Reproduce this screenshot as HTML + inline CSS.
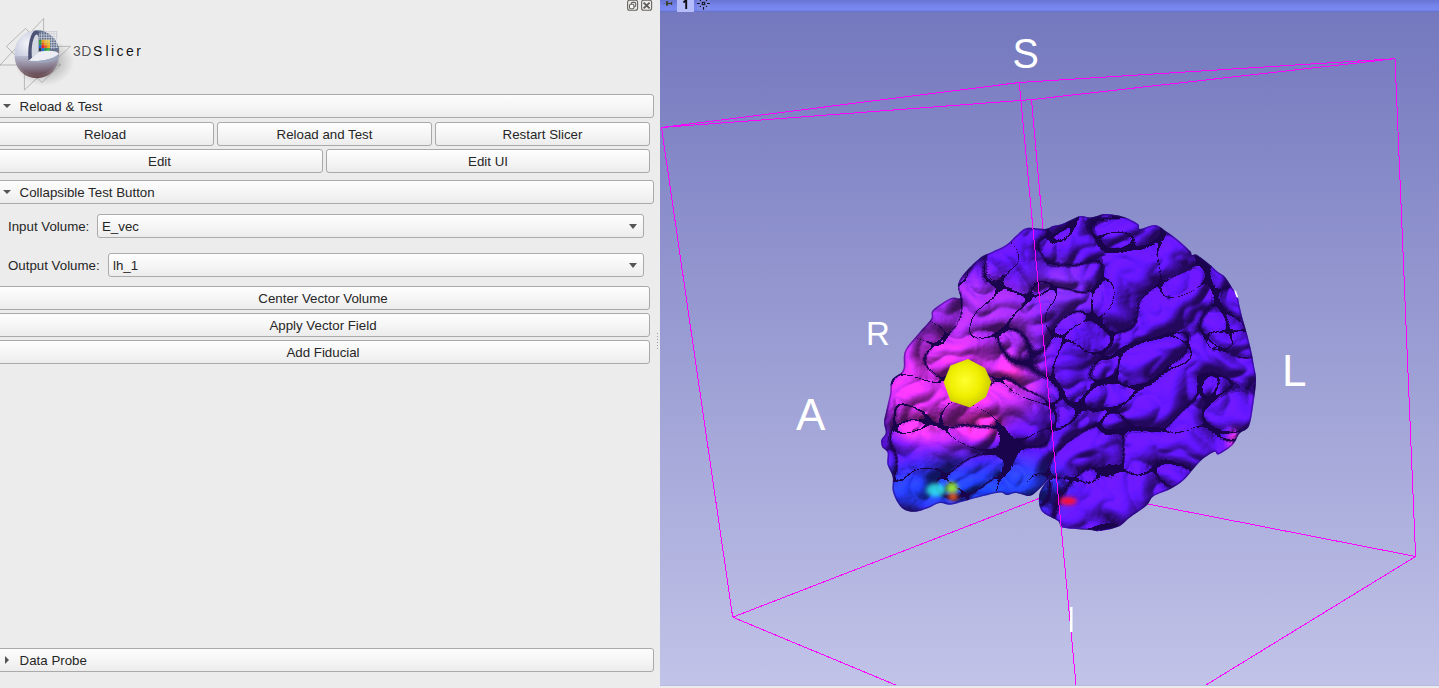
<!DOCTYPE html>
<html><head><meta charset="utf-8">
<style>
*{margin:0;padding:0;box-sizing:border-box}
html,body{width:1439px;height:688px;overflow:hidden;background:#ececec;font-family:"Liberation Sans",sans-serif;font-size:13.3px;color:#262626}
.a{position:absolute}
.hdr{position:absolute;left:-4px;height:24px;border:1px solid #aaa;border-radius:3px;background:linear-gradient(#fdfdfd,#f4f4f4 60%,#ececec)}
.hdr span{position:absolute;left:22.6px;top:4px;white-space:nowrap}
.tri{position:absolute;left:6px;top:9px;width:0;height:0;border-left:4px solid transparent;border-right:4px solid transparent;border-top:4px solid #555}
.trir{position:absolute;left:8px;top:7px;width:0;height:0;border-top:4px solid transparent;border-bottom:4px solid transparent;border-left:4.2px solid #555}
.btn{position:absolute;height:24px;border:1px solid #a9a9a9;border-radius:3px;background:linear-gradient(#fefefe,#f6f6f6 50%,#ececec);text-align:center;line-height:23px;white-space:nowrap}
.cb{position:absolute;height:24px;border:1px solid #ababab;border-radius:3px;background:linear-gradient(#fefefe,#f6f6f6 50%,#ececec);line-height:23px;padding-left:4px;white-space:nowrap}
.cb i{position:absolute;right:6px;top:9px;width:0;height:0;border-left:4.5px solid transparent;border-right:4.5px solid transparent;border-top:5px solid #555}
.lbl{position:absolute;white-space:nowrap}
#view{position:absolute;left:660px;top:0;width:779px;height:686px;background:linear-gradient(#7277bc,#8f93cb 45%,#bfc0e6);overflow:hidden}
</style></head><body>
<!-- logo -->
<svg class="a" style="left:0;top:0" width="160" height="92" viewBox="0 0 160 92">
<defs>
<radialGradient id="lsph" cx="0.3" cy="0.3" r="0.85"><stop offset="0" stop-color="#f4f5fa"/><stop offset="0.45" stop-color="#c4c8dc"/><stop offset="0.75" stop-color="#8a8aa4"/><stop offset="1" stop-color="#5a3c44"/></radialGradient>
<radialGradient id="lsh" cx="0.5" cy="0.5" r="0.5"><stop offset="0" stop-color="#000" stop-opacity="0.35"/><stop offset="1" stop-color="#000" stop-opacity="0"/></radialGradient>
<linearGradient id="lbot" x1="0" y1="0" x2="0" y2="1"><stop offset="0" stop-color="#b4b8cc"/><stop offset="0.45" stop-color="#8a7e90"/><stop offset="1" stop-color="#563034"/></linearGradient>
</defs>
<ellipse cx="44" cy="62" rx="30" ry="24" fill="url(#lsh)"/>
<g stroke="#8a8a8a" stroke-width="0.55" fill="none">
<path d="M43.6,18.5 L0,65 L60.5,65 L41.9,82.5 L6.4,46.4 L25.6,28.4 L60.5,65"/>
<path d="M43.6,18.5 L43.6,48"/>
<path d="M70.4,46.4 L24.4,90 L24.4,48"/>
<path d="M70.4,46.4 L57,46.4"/>
</g>
<g stroke="#b4b8c4" stroke-width="0.45"><path d="M41.5,31.5 V51 M44,31.5 V51 M46.5,31.5 V51 M49,31.5 V51 M51.5,31.5 V51 M54,31.5 V51 M56.5,31.5 V51 M38.8,31.5 H57.5 M38.8,34 H57.5 M38.8,36.5 H57.5 M38.8,39 H57.5"/></g>
<circle cx="36.8" cy="52.6" r="22.3" fill="url(#lsph)"/>
<!-- bottom half darker -->
<path d="M14.5,56 A22.3,22.3 0 0 0 59.1,56 Z" fill="url(#lbot)" opacity="0.85"/>
<!-- cutout quarter -->
<path d="M36.8,30.3 A22.3,22.3 0 0 1 59.1,50 L36.8,60 Z" fill="#66738f"/>
<g stroke="#e8ecf4" stroke-width="0.5">
<path d="M39,33 V52 M41.5,32 V52 M44,31.5 V51 M46.5,32 V50 M49,33 V50 M51.5,34 V49 M54,36 V49 M56.5,39 V48"/>
<path d="M37,35 H55 M37,37.5 H56 M37,40 H57 M37,42.5 H58 M37,45 H58 M37,47.5 H58"/>
</g>
<g>
<rect x="38.8" y="39.8" width="2.8" height="2.8" fill="#2a9a3a"/><rect x="41.6" y="39.8" width="2.8" height="2.8" fill="#f0a020"/><rect x="44.4" y="39.8" width="2.8" height="2.8" fill="#f0c040"/><rect x="47.2" y="39.8" width="2.8" height="2.8" fill="#e8d060"/>
<rect x="38.8" y="42.6" width="2.8" height="2.8" fill="#20a040"/><rect x="41.6" y="42.6" width="2.8" height="2.8" fill="#f06020"/><rect x="44.4" y="42.6" width="2.8" height="2.8" fill="#f0b020"/><rect x="47.2" y="42.6" width="2.8" height="2.8" fill="#f0c030"/>
<rect x="38.8" y="45.4" width="2.8" height="2.8" fill="#2060e0"/><rect x="41.6" y="45.4" width="2.8" height="2.8" fill="#f02020"/><rect x="44.4" y="45.4" width="2.8" height="2.8" fill="#f06020"/><rect x="47.2" y="45.4" width="2.8" height="2.8" fill="#f0b020"/>
<rect x="38.8" y="48.2" width="2.8" height="2.8" fill="#303840"/><rect x="41.6" y="48.2" width="2.8" height="2.8" fill="#2070e0"/><rect x="44.4" y="48.2" width="2.8" height="2.8" fill="#20a040"/><rect x="47.2" y="48.2" width="2.8" height="2.8" fill="#40b040"/>
</g>
<!-- vertical cut face crescent -->
<path d="M28.5,60.5 C27.5,50 29,36 34,31 C37,30 38.5,31 38.8,33 L38.8,53 Z" fill="#4c5274"/>
<path d="M32,58 C31,50 32,40 35.5,35 C37,34 38,35 38.6,37 L38.6,53 Z" fill="#d4d8e0"/>
<!-- horizontal cut face -->
<path d="M28.5,60.8 L38.8,52 C46,50.5 55,50 59,53.5 C58.5,57 48,60 38,61 Z" fill="#eceef4"/>
<path d="M28.5,60.8 C40,62 54,59 59,53.5 C59,56 58,58 57,59.5 C50,63 38,64.5 28.5,60.8 Z" fill="#9ea4bc"/>
</svg>
<div class="lbl" style="left:73.0px;top:43px;font-size:14px;color:#555;text-shadow:0 0 1px #fff,0 0 2px #fff">3</div><div class="lbl" style="left:81.2px;top:43px;font-size:14px;color:#555;text-shadow:0 0 1px #fff,0 0 2px #fff">D</div><div class="lbl" style="left:93.0px;top:43px;font-size:14px;color:#111;text-shadow:0 0 1px #fff,0 0 2px #fff">S</div><div class="lbl" style="left:105.5px;top:43px;font-size:14px;color:#111;text-shadow:0 0 1px #fff,0 0 2px #fff">l</div><div class="lbl" style="left:111.1px;top:43px;font-size:14px;color:#111;text-shadow:0 0 1px #fff,0 0 2px #fff">i</div><div class="lbl" style="left:116.4px;top:43px;font-size:14px;color:#111;text-shadow:0 0 1px #fff,0 0 2px #fff">c</div><div class="lbl" style="left:125.9px;top:43px;font-size:14px;color:#111;text-shadow:0 0 1px #fff,0 0 2px #fff">e</div><div class="lbl" style="left:136.3px;top:43px;font-size:14px;color:#111;text-shadow:0 0 1px #fff,0 0 2px #fff">r</div>

<!-- top-right dock buttons -->
<svg class="a" style="left:620px;top:0" width="40" height="14" viewBox="620 0 40 14">
<g fill="none" stroke="#68645e" stroke-width="1.1">
<rect x="627.6" y="0.3" width="10" height="10" rx="2"/>
<rect x="641.6" y="0.3" width="10" height="10" rx="2"/>
<rect x="631.3" y="2.4" width="4.4" height="4.4" rx="1.2"/>
<rect x="629.5" y="4.3" width="4.4" height="4.4" rx="1.2" fill="#fafafa"/>
</g>
<path d="M643.6,2.6 L649.6,8.4 M649.6,2.6 L643.6,8.4" stroke="#5f5b56" stroke-width="1.8"/>
</svg>
<div class="hdr" style="top:94px;width:658px"><div class="tri"></div><span>Reload &amp; Test</span></div>
<div class="btn" style="left:-4px;top:122px;width:218px">Reload</div>
<div class="btn" style="left:217px;top:122px;width:215px">Reload and Test</div>
<div class="btn" style="left:435px;top:122px;width:215px">Restart Slicer</div>
<div class="btn" style="left:-4px;top:149px;width:327px">Edit</div>
<div class="btn" style="left:326px;top:149px;width:324px">Edit UI</div>

<div class="hdr" style="top:180px;width:658px"><div class="tri"></div><span>Collapsible Test Button</span></div>
<div class="lbl" style="left:8px;top:219px">Input Volume:</div>
<div class="cb" style="left:97px;top:214px;width:547px">E_vec<i></i></div>
<div class="lbl" style="left:8px;top:258px">Output Volume:</div>
<div class="cb" style="left:108px;top:253px;width:536px">lh_1<i></i></div>

<div class="btn" style="left:-4px;top:286px;width:654px">Center Vector Volume</div>
<div class="btn" style="left:-4px;top:313px;width:654px">Apply Vector Field</div>
<div class="btn" style="left:-4px;top:340px;width:654px">Add Fiducial</div>

<div class="hdr" style="top:648px;width:658px"><div class="trir"></div><span>Data Probe</span></div>

<!-- splitter --><div class="a" style="left:656.5px;top:333px;width:1px;height:17px;background:repeating-linear-gradient(#9a9a9a 0 1px,transparent 1px 3px)"></div>
<div id="view">
<svg width="779" height="686" viewBox="660 0 779 686" style="position:absolute;left:0;top:0">
<defs>
<linearGradient id="bg" x1="0" y1="12" x2="0" y2="686" gradientUnits="userSpaceOnUse"><stop offset="0" stop-color="#7478be"/><stop offset="1" stop-color="#c1c3e8"/></linearGradient>
<linearGradient id="bar" x1="0" y1="0" x2="0" y2="12" gradientUnits="userSpaceOnUse"><stop offset="0" stop-color="#6874d4"/><stop offset="0.5" stop-color="#7585ec"/><stop offset="0.9" stop-color="#7888f2"/><stop offset="1" stop-color="#7080e4"/></linearGradient>
<clipPath id="bc"><path d="M886.0,412.0 C887.0,407.2 889.0,399.3 890.0,394.0 C891.0,388.7 889.8,384.0 892.0,380.0 C894.2,376.0 900.8,374.8 903.0,370.0 C905.2,365.2 902.3,357.2 905.0,351.0 C907.7,344.8 914.7,338.3 919.0,333.0 C923.3,327.7 928.7,322.8 931.0,319.0 C933.3,315.2 929.7,313.5 933.0,310.0 C936.3,306.5 946.5,300.0 951.0,298.0 C955.5,296.0 958.8,300.0 960.0,298.0 C961.2,296.0 957.5,289.8 958.0,286.0 C958.5,282.2 959.3,279.7 963.0,275.0 C966.7,270.3 975.2,261.8 980.0,258.0 C984.8,254.2 987.7,254.2 992.0,252.0 C996.3,249.8 1001.8,247.8 1006.0,245.0 C1010.2,242.2 1013.5,237.8 1017.0,235.0 C1020.5,232.2 1022.3,229.0 1027.0,228.0 C1031.7,227.0 1040.7,229.3 1045.0,229.0 C1049.3,228.7 1050.2,226.8 1053.0,226.0 C1055.8,225.2 1058.7,225.2 1062.0,224.0 C1065.3,222.8 1069.8,220.3 1073.0,219.0 C1076.2,217.7 1078.2,216.2 1081.0,216.0 C1083.8,215.8 1087.3,217.5 1090.0,217.5 C1092.7,217.5 1094.3,216.6 1097.0,216.0 C1099.7,215.4 1101.5,213.8 1106.0,214.0 C1110.5,214.2 1118.7,215.3 1124.0,217.0 C1129.3,218.7 1135.3,222.0 1138.0,224.0 C1140.7,226.0 1137.2,228.8 1140.0,229.0 C1142.8,229.2 1150.5,224.5 1155.0,225.0 C1159.5,225.5 1163.2,229.5 1167.0,232.0 C1170.8,234.5 1174.2,236.8 1178.0,240.0 C1181.8,243.2 1187.7,248.5 1190.0,251.0 C1192.3,253.5 1190.8,254.3 1192.0,255.0 C1193.2,255.7 1194.2,253.5 1197.0,255.0 C1199.8,256.5 1205.5,261.2 1209.0,264.0 C1212.5,266.8 1215.3,269.8 1218.0,272.0 C1220.7,274.2 1222.5,274.2 1225.0,277.0 C1227.5,279.8 1231.0,286.2 1233.0,289.0 C1235.0,291.8 1235.8,290.8 1237.0,294.0 C1238.2,297.2 1239.0,303.7 1240.0,308.0 C1241.0,312.3 1241.8,315.7 1243.0,320.0 C1244.2,324.3 1245.7,329.0 1247.0,334.0 C1248.3,339.0 1249.8,344.7 1251.0,350.0 C1252.2,355.3 1253.2,361.0 1254.0,366.0 C1254.8,371.0 1256.1,373.8 1256.0,380.0 C1255.9,386.2 1254.7,395.3 1253.5,403.0 C1252.3,410.7 1251.3,420.9 1249.0,426.0 C1246.7,431.1 1242.2,430.3 1239.5,433.5 C1236.8,436.7 1236.1,441.5 1232.6,445.0 C1229.1,448.5 1221.7,453.2 1218.6,454.4 C1215.5,455.6 1217.1,450.8 1214.0,452.0 C1210.9,453.2 1205.0,456.7 1200.0,461.4 C1195.0,466.1 1188.7,475.4 1183.7,480.0 C1178.7,484.6 1174.8,486.6 1169.8,489.3 C1164.8,492.0 1157.4,493.6 1153.5,496.3 C1149.6,499.0 1150.4,502.1 1146.5,505.6 C1142.6,509.1 1134.9,513.7 1130.2,517.2 C1125.5,520.7 1123.6,524.2 1118.6,526.5 C1113.6,528.8 1104.8,530.4 1100.0,531.0 C1095.2,531.6 1095.2,530.4 1090.0,530.0 C1084.8,529.6 1073.3,529.0 1068.5,528.5 C1063.7,528.0 1062.8,528.2 1061.0,527.0 C1059.2,525.8 1060.7,523.2 1058.0,521.0 C1055.3,518.8 1048.0,516.2 1045.0,514.0 C1042.0,511.8 1041.0,510.4 1040.0,507.6 C1039.0,504.8 1038.7,500.3 1039.0,497.0 C1039.3,493.7 1039.8,491.7 1042.0,488.0 C1044.2,484.3 1051.5,475.8 1052.0,475.0 C1052.5,474.2 1047.7,480.2 1045.0,483.0 C1042.3,485.8 1038.7,489.8 1036.0,492.0 C1033.3,494.2 1032.3,495.8 1029.0,496.0 C1025.7,496.2 1019.7,493.2 1016.0,493.0 C1012.3,492.8 1009.7,495.1 1007.0,495.0 C1004.3,494.9 1003.9,492.3 1000.0,492.5 C996.1,492.7 989.4,494.6 983.4,496.0 C977.4,497.4 969.5,499.8 964.0,501.2 C958.5,502.6 954.3,504.4 950.3,504.7 C946.3,505.0 943.6,502.4 939.8,503.0 C936.0,503.6 931.7,506.8 927.6,508.2 C923.5,509.6 919.2,511.4 915.4,511.7 C911.6,512.0 907.9,511.4 905.0,510.0 C902.1,508.6 900.0,506.2 898.0,503.0 C896.0,499.8 893.6,495.1 892.7,490.7 C891.8,486.3 893.6,481.1 892.7,476.8 C891.8,472.5 888.4,468.7 887.5,464.6 C886.6,460.5 888.4,455.3 887.5,452.4 C886.6,449.5 883.2,449.1 882.2,447.0 C881.2,444.9 880.7,442.3 881.3,440.0 C881.9,437.7 885.2,435.9 885.7,433.0 C886.2,430.1 884.0,426.2 884.0,422.7 C884.0,419.2 885.0,416.8 886.0,412.0Z"/></clipPath>
<filter id="blur6" x="-50%" y="-50%" width="200%" height="200%"><feGaussianBlur stdDeviation="12"/></filter>
<filter id="blur2" x="-50%" y="-50%" width="200%" height="200%"><feGaussianBlur stdDeviation="2"/></filter>
<filter id="blur3" x="-50%" y="-50%" width="200%" height="200%"><feGaussianBlur stdDeviation="4"/></filter>
<filter id="tex" x="860" y="200" width="420" height="340" filterUnits="userSpaceOnUse">
<feTurbulence type="turbulence" baseFrequency="0.045" numOctaves="2" seed="7" result="t"/>
<feColorMatrix in="t" type="matrix" values="0 0 0 0 0.12  0 0 0 0 0.03  0 0 0 0 0.35  -5 0 0 0 1.15"/>
</filter>
<radialGradient id="sph" cx="0.45" cy="0.45" r="0.6"><stop offset="0" stop-color="#ffff30"/><stop offset="0.55" stop-color="#eeee00"/><stop offset="1" stop-color="#c4c400"/></radialGradient>
<filter id="lit" x="820" y="160" width="500" height="420" filterUnits="userSpaceOnUse" color-interpolation-filters="sRGB">
<feTurbulence type="turbulence" baseFrequency="0.019 0.021" numOctaves="1" seed="11" result="n0"/>
<feTurbulence type="turbulence" baseFrequency="0.019 0.021" numOctaves="2" seed="11" result="nh0"/>
<feTurbulence type="fractalNoise" baseFrequency="0.014" numOctaves="2" seed="3" result="w"/>
<feDisplacementMap in="n0" in2="w" scale="28" xChannelSelector="R" yChannelSelector="G" result="n"/>
<feDisplacementMap in="nh0" in2="w" scale="28" xChannelSelector="R" yChannelSelector="G" result="nh"/>
<feColorMatrix in="nh" type="matrix" values="0 0 0 0 0  0 0 0 0 0  0 0 0 0 0  1 0 0 0 0" result="h0"/>
<feComponentTransfer in="h0" result="h"><feFuncA type="gamma" amplitude="1" exponent="0.5" offset="0"/></feComponentTransfer>
<feGaussianBlur in="h" stdDeviation="1.0" result="hb"/>
<feDiffuseLighting in="hb" surfaceScale="20" diffuseConstant="1.0" lighting-color="#ffffff" result="L"><feDistantLight azimuth="235" elevation="50"/></feDiffuseLighting>
<feComposite in="SourceGraphic" in2="L" operator="arithmetic" k1="0.9" k2="0.4" k3="0" k4="0" result="c"/>
<feColorMatrix in="n" type="matrix" values="0 0 0 0 0.1  0 0 0 0 0.02  0 0 0 0 0.3  -28 0 0 0 1.2" result="ln"/>
<feComposite in="ln" in2="c" operator="over" result="c2"/>
<feComposite in="c2" in2="SourceGraphic" operator="in"/>
</filter>
</defs>
<rect x="660" y="0" width="779" height="686" fill="url(#bg)"/>
<!-- box lines behind brain -->
<g stroke="#ff00ff" stroke-width="1" fill="none" shape-rendering="crispEdges">
<path d="M661.5,127.5 L1019.5,82.5 L1395,58.7 M661.5,127.5 L1031.5,99.6 L1395,58.7 M661.5,127.5 L732.7,617.2 M1395,58.7 L1415.6,556.5 M732.7,617.2 L1066,488 L1415.6,556.5 M732.7,617.2 L903,688 M1415.6,556.5 L1201,688 M1031.5,99.6 L1066,488"/>
</g>
<!-- brain -->
<g clip-path="url(#bc)">
<g filter="url(#lit)">
<rect x="820" y="160" width="500" height="420" fill="#5814e6"/>
<ellipse cx="965" cy="330" rx="80" ry="55" fill="#9a2ce6" filter="url(#blur6)"/>
<ellipse cx="945" cy="392" rx="68" ry="55" fill="#cc2ee2" filter="url(#blur6)"/>
<ellipse cx="1012" cy="385" rx="32" ry="30" fill="#c02ee4" filter="url(#blur6)"/>
<ellipse cx="980" cy="425" rx="22" ry="13" fill="#f030d0" filter="url(#blur3)"/>
<ellipse cx="1010" cy="372" rx="12" ry="12" fill="#f030d0" filter="url(#blur3)"/>
<ellipse cx="920" cy="425" rx="22" ry="14" fill="#d030d8" filter="url(#blur3)"/>
<ellipse cx="1060" cy="290" rx="30" ry="25" fill="#7a2ae8" filter="url(#blur6)"/>
<ellipse cx="965" cy="490" rx="100" ry="26" fill="#1a3cf0" filter="url(#blur6)"/>
<ellipse cx="1020" cy="478" rx="25" ry="14" fill="#2040f0" filter="url(#blur6)"/>
<ellipse cx="1234" cy="440" rx="5" ry="11" fill="#f030b0" filter="url(#blur3)"/>
</g>
<ellipse cx="936" cy="490" rx="10" ry="7" fill="#30e8f0" opacity="0.85" filter="url(#blur2)"/>
<ellipse cx="952" cy="488" rx="6" ry="6" fill="#a0f020" opacity="0.9" filter="url(#blur2)"/>
<ellipse cx="953" cy="497" rx="5" ry="3.5" fill="#ff6010" opacity="0.9" filter="url(#blur2)"/>
<ellipse cx="1068" cy="501" rx="9" ry="4" fill="#ff1030" filter="url(#blur2)"/>
</g>
<path d="M886.0,412.0 C887.0,407.2 889.0,399.3 890.0,394.0 C891.0,388.7 889.8,384.0 892.0,380.0 C894.2,376.0 900.8,374.8 903.0,370.0 C905.2,365.2 902.3,357.2 905.0,351.0 C907.7,344.8 914.7,338.3 919.0,333.0 C923.3,327.7 928.7,322.8 931.0,319.0 C933.3,315.2 929.7,313.5 933.0,310.0 C936.3,306.5 946.5,300.0 951.0,298.0 C955.5,296.0 958.8,300.0 960.0,298.0 C961.2,296.0 957.5,289.8 958.0,286.0 C958.5,282.2 959.3,279.7 963.0,275.0 C966.7,270.3 975.2,261.8 980.0,258.0 C984.8,254.2 987.7,254.2 992.0,252.0 C996.3,249.8 1001.8,247.8 1006.0,245.0 C1010.2,242.2 1013.5,237.8 1017.0,235.0 C1020.5,232.2 1022.3,229.0 1027.0,228.0 C1031.7,227.0 1040.7,229.3 1045.0,229.0 C1049.3,228.7 1050.2,226.8 1053.0,226.0 C1055.8,225.2 1058.7,225.2 1062.0,224.0 C1065.3,222.8 1069.8,220.3 1073.0,219.0 C1076.2,217.7 1078.2,216.2 1081.0,216.0 C1083.8,215.8 1087.3,217.5 1090.0,217.5 C1092.7,217.5 1094.3,216.6 1097.0,216.0 C1099.7,215.4 1101.5,213.8 1106.0,214.0 C1110.5,214.2 1118.7,215.3 1124.0,217.0 C1129.3,218.7 1135.3,222.0 1138.0,224.0 C1140.7,226.0 1137.2,228.8 1140.0,229.0 C1142.8,229.2 1150.5,224.5 1155.0,225.0 C1159.5,225.5 1163.2,229.5 1167.0,232.0 C1170.8,234.5 1174.2,236.8 1178.0,240.0 C1181.8,243.2 1187.7,248.5 1190.0,251.0 C1192.3,253.5 1190.8,254.3 1192.0,255.0 C1193.2,255.7 1194.2,253.5 1197.0,255.0 C1199.8,256.5 1205.5,261.2 1209.0,264.0 C1212.5,266.8 1215.3,269.8 1218.0,272.0 C1220.7,274.2 1222.5,274.2 1225.0,277.0 C1227.5,279.8 1231.0,286.2 1233.0,289.0 C1235.0,291.8 1235.8,290.8 1237.0,294.0 C1238.2,297.2 1239.0,303.7 1240.0,308.0 C1241.0,312.3 1241.8,315.7 1243.0,320.0 C1244.2,324.3 1245.7,329.0 1247.0,334.0 C1248.3,339.0 1249.8,344.7 1251.0,350.0 C1252.2,355.3 1253.2,361.0 1254.0,366.0 C1254.8,371.0 1256.1,373.8 1256.0,380.0 C1255.9,386.2 1254.7,395.3 1253.5,403.0 C1252.3,410.7 1251.3,420.9 1249.0,426.0 C1246.7,431.1 1242.2,430.3 1239.5,433.5 C1236.8,436.7 1236.1,441.5 1232.6,445.0 C1229.1,448.5 1221.7,453.2 1218.6,454.4 C1215.5,455.6 1217.1,450.8 1214.0,452.0 C1210.9,453.2 1205.0,456.7 1200.0,461.4 C1195.0,466.1 1188.7,475.4 1183.7,480.0 C1178.7,484.6 1174.8,486.6 1169.8,489.3 C1164.8,492.0 1157.4,493.6 1153.5,496.3 C1149.6,499.0 1150.4,502.1 1146.5,505.6 C1142.6,509.1 1134.9,513.7 1130.2,517.2 C1125.5,520.7 1123.6,524.2 1118.6,526.5 C1113.6,528.8 1104.8,530.4 1100.0,531.0 C1095.2,531.6 1095.2,530.4 1090.0,530.0 C1084.8,529.6 1073.3,529.0 1068.5,528.5 C1063.7,528.0 1062.8,528.2 1061.0,527.0 C1059.2,525.8 1060.7,523.2 1058.0,521.0 C1055.3,518.8 1048.0,516.2 1045.0,514.0 C1042.0,511.8 1041.0,510.4 1040.0,507.6 C1039.0,504.8 1038.7,500.3 1039.0,497.0 C1039.3,493.7 1039.8,491.7 1042.0,488.0 C1044.2,484.3 1051.5,475.8 1052.0,475.0 C1052.5,474.2 1047.7,480.2 1045.0,483.0 C1042.3,485.8 1038.7,489.8 1036.0,492.0 C1033.3,494.2 1032.3,495.8 1029.0,496.0 C1025.7,496.2 1019.7,493.2 1016.0,493.0 C1012.3,492.8 1009.7,495.1 1007.0,495.0 C1004.3,494.9 1003.9,492.3 1000.0,492.5 C996.1,492.7 989.4,494.6 983.4,496.0 C977.4,497.4 969.5,499.8 964.0,501.2 C958.5,502.6 954.3,504.4 950.3,504.7 C946.3,505.0 943.6,502.4 939.8,503.0 C936.0,503.6 931.7,506.8 927.6,508.2 C923.5,509.6 919.2,511.4 915.4,511.7 C911.6,512.0 907.9,511.4 905.0,510.0 C902.1,508.6 900.0,506.2 898.0,503.0 C896.0,499.8 893.6,495.1 892.7,490.7 C891.8,486.3 893.6,481.1 892.7,476.8 C891.8,472.5 888.4,468.7 887.5,464.6 C886.6,460.5 888.4,455.3 887.5,452.4 C886.6,449.5 883.2,449.1 882.2,447.0 C881.2,444.9 880.7,442.3 881.3,440.0 C881.9,437.7 885.2,435.9 885.7,433.0 C886.2,430.1 884.0,426.2 884.0,422.7 C884.0,419.2 885.0,416.8 886.0,412.0Z" fill="none" stroke="#28087a" stroke-width="3" opacity="0.55" clip-path="url(#bc)"/>
<path d="M1234.3,289.6 L1236.2,291.5 L1238,296 L1237.8,298 L1236.4,297 L1234.6,292 Z" fill="#ffffff"/>
<!-- sphere -->
<polygon points="968,359 985,368 991.3,382 986,397 970,407.5 950.5,401 943.6,382 950.5,365.6" fill="url(#sph)"/>
<!-- front vertical over brain -->
<path d="M1019.2,82.5 L1083,759" stroke="#ff00ff" stroke-width="1" fill="none" shape-rendering="crispEdges"/>
<!-- labels -->
<g fill="#ffffff" font-family="Liberation Sans" >
<text x="0" y="0" font-size="43" transform="translate(1012.5,68) scale(0.92,1)">S</text>
<text x="866" y="345" font-size="33">R</text>
<text x="796" y="430" font-size="44">A</text>
<text x="1282" y="386" font-size="44">L</text>
<rect x="1070" y="607" width="2.5" height="25"/>
</g>
<rect x="660" y="0" width="779" height="12" fill="url(#bar)"/>
<rect x="660" y="10.8" width="779" height="1" fill="#6570c4"/>
<rect x="660" y="685" width="779" height="1" fill="#b9bae2"/>
<rect x="677" y="0" width="17" height="12" fill="#b4bcfa"/>
<path d="M686.2,0 V9 M683.4,2.4 L686,0.2" stroke="#111" stroke-width="1.9" fill="none"/>
<g fill="#3e3e2c">
<path d="M663,3.3 H666 V3.8 H663 Z" opacity="0.6"/>
<rect x="666" y="1.2" width="2" height="4.5"/>
<rect x="668" y="2.8" width="3" height="1.4"/>
<rect x="671" y="1.9" width="1.2" height="3"/>
</g>
<rect x="697" y="0" width="13" height="10.5" fill="#8a92dc" opacity="0.5"/>
<g stroke="#15152a" stroke-width="1.1" fill="none">
<path d="M697,3.5 H699.9 M707,3.5 H709.9 M703.5,7 V9.8"/>
<rect x="702.3" y="2.4" width="2.4" height="2.2"/>
</g>
<g fill="#15152a"><circle cx="700.4" cy="0.6" r="0.7"/><circle cx="706.5" cy="0.6" r="0.7"/><circle cx="700.4" cy="6.4" r="0.7"/><circle cx="706.5" cy="6.4" r="0.7"/></g>
</svg>
</div>
</body></html>
